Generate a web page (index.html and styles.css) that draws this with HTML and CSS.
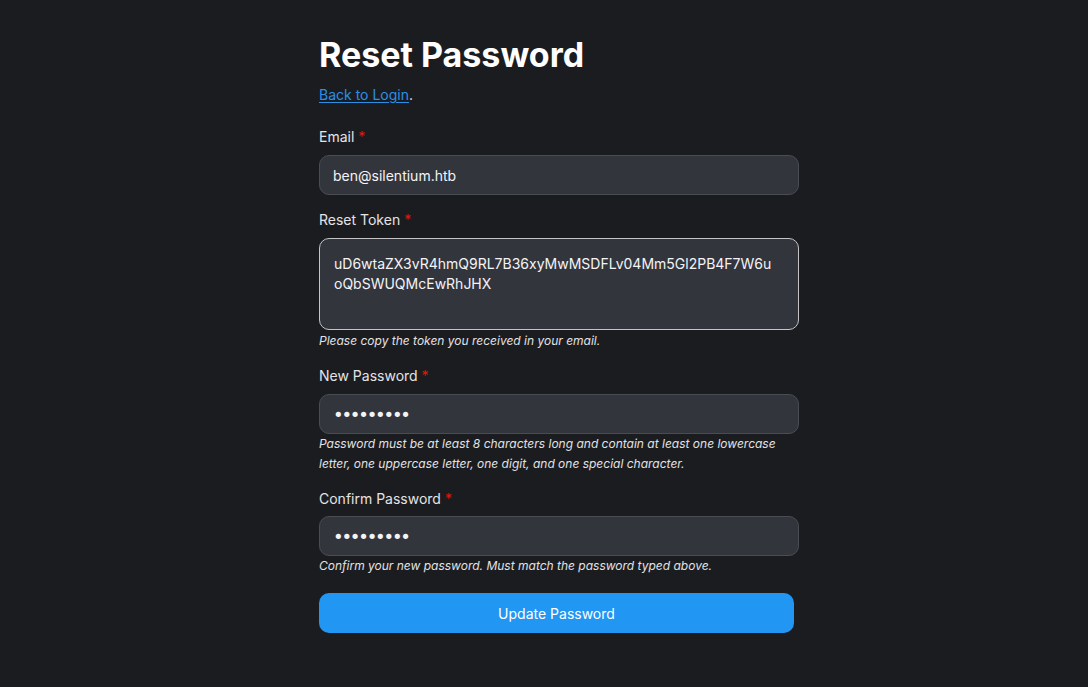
FILE: index.html
```html
<!DOCTYPE html>
<html lang="en">
<head>
<meta charset="utf-8">
<title>Reset Password</title>
<link rel="stylesheet" href="styles.css">
</head>
<body>
<main class="page">
  <h1 class="title">Reset Password</h1>
  <p class="back"><a href="#" class="back-link">Back to Login</a>.</p>
  <form class="form">
    <div class="group">
      <label class="label" for="email">Email <span class="req">*</span></label>
      <input class="input" id="email" type="email" value="ben@silentium.htb">
    </div>
    <div class="group">
      <label class="label" for="token">Reset Token <span class="req">*</span></label>
      <textarea class="textarea" id="token">uD6wtaZX3vR4hmQ9RL7B36xyMwMSDFLv04Mm5Gl2PB4F7W6uoQbSWUQMcEwRhJHX</textarea>
      <div class="hint hint-gap">Please copy the token you received in your email.</div>
    </div>
    <div class="group">
      <label class="label" for="pw">New Password <span class="req">*</span></label>
      <input class="input input-secret" id="pw" type="password" value="abcdefghi">
      <div class="hint">Password must be at least 8 characters long and contain at least one lowercase letter, one uppercase letter, one digit, and one special character.</div>
    </div>
    <div class="group group-last">
      <label class="label label-tight" for="pw2">Confirm Password <span class="req">*</span></label>
      <input class="input input-secret" id="pw2" type="password" value="abcdefghi">
      <div class="hint">Confirm your new password. Must match the password typed above.</div>
    </div>
    <button class="button" type="button">Update Password</button>
  </form>
</main>
</body>
</html>
```
FILE: styles.css
```css
* { box-sizing: border-box; }
html, body {
  margin: 0;
  padding: 0;
  background: #1b1c20;
  color: #ececee;
  font-family: Inter, "Noto Sans", sans-serif;
}
.page {
  width: 510px;
  margin: 0 auto;
  padding: 35px 0 40px 30px;
}
.title {
  margin: 0;
  font-size: 34px;
  line-height: 40px;
  font-weight: 700;
  color: #ffffff;
}
.back {
  margin: 8px 0 0;
  font-size: 14px;
  line-height: 24px;
  color: #e6e6e6;
}
.back-link {
  color: #2990e6;
  text-decoration: underline;
  text-underline-offset: 2px;
}
.form {
  margin-top: 20px;
  display: flex;
  flex-direction: column;
}
.group {
  display: flex;
  flex-direction: column;
  margin-bottom: 15px;
}
.group-last { margin-bottom: 17px; }
.label {
  font-size: 14px;
  line-height: 20px;
  color: #e4e4e6;
  margin-bottom: 8px;
}
.label-tight { margin-bottom: 7px; }
.req { color: #e3170a; }
.input, .textarea {
  width: 480px;
  background: #33353d;
  border: 1px solid #4a4c54;
  border-radius: 10px;
  color: #f4f4f6;
  font-family: Inter, "Noto Sans", sans-serif;
  font-size: 14px;
  outline: none;
}
.input {
  height: 40px;
  padding: 0 13px;
}
.input-secret {
  font-family: "DejaVu Sans", sans-serif;
  font-size: 18px;
  letter-spacing: -2.2px;
}
.textarea {
  height: 92px;
  padding: 15px 22px 15px 14px;
  line-height: 20px;
  resize: none;
  border-color: #c4c4c8;
  overflow: hidden;
}
.hint {
  font-size: 12px;
  line-height: 20px;
  font-style: italic;
  color: #e2e2e4;
}
.hint-gap { margin-top: 1px; }
.button {
  width: 475px;
  height: 40px;
  border: none;
  border-radius: 10px;
  background: #2196f3;
  color: #ffffff;
  font-family: Inter, "Noto Sans", sans-serif;
  font-size: 14px;
  cursor: pointer;
}
```
